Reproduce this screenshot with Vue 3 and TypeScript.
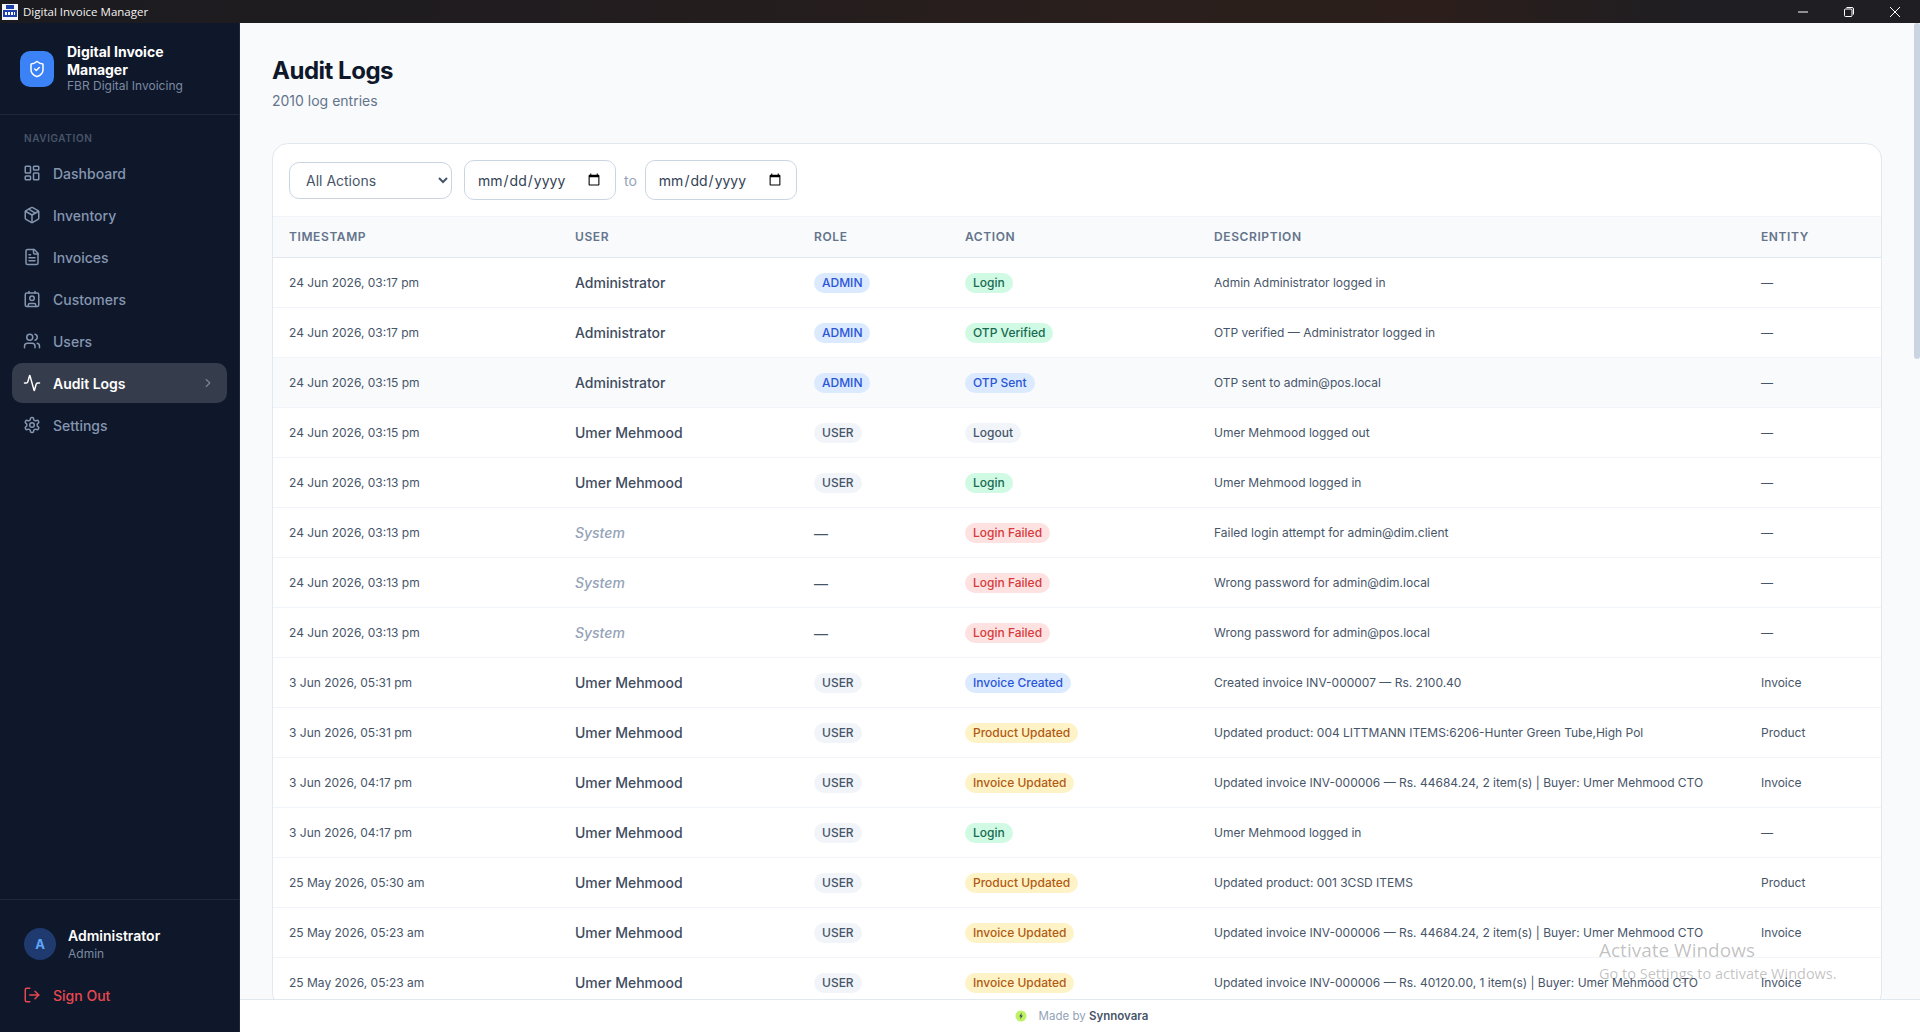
<script setup lang="ts">
type Tone = 'blue' | 'green' | 'gray' | 'amber' | 'red'

interface LogRow {
  time: string
  user: string
  role: 'ADMIN' | 'USER' | ''
  action: string
  desc: string
  entity: string
}

const tones: Record<string, Tone> = {
  Login: 'green',
  'OTP Verified': 'green',
  'OTP Sent': 'blue',
  Logout: 'gray',
  'Login Failed': 'red',
  'Invoice Created': 'blue',
  'Product Updated': 'amber',
  'Invoice Updated': 'amber',
}

const navItems = ['Dashboard', 'Inventory', 'Invoices', 'Customers', 'Users', 'Audit Logs', 'Settings']

const rows: LogRow[] = [
  { time: '24 Jun 2026, 03:17 pm', user: 'Administrator', role: 'ADMIN', action: 'Login', desc: 'Admin Administrator logged in', entity: '—' },
  { time: '24 Jun 2026, 03:17 pm', user: 'Administrator', role: 'ADMIN', action: 'OTP Verified', desc: 'OTP verified — Administrator logged in', entity: '—' },
  { time: '24 Jun 2026, 03:15 pm', user: 'Administrator', role: 'ADMIN', action: 'OTP Sent', desc: 'OTP sent to admin@pos.local', entity: '—' },
  { time: '24 Jun 2026, 03:15 pm', user: 'Umer Mehmood', role: 'USER', action: 'Logout', desc: 'Umer Mehmood logged out', entity: '—' },
  { time: '24 Jun 2026, 03:13 pm', user: 'Umer Mehmood', role: 'USER', action: 'Login', desc: 'Umer Mehmood logged in', entity: '—' },
  { time: '24 Jun 2026, 03:13 pm', user: 'System', role: '', action: 'Login Failed', desc: 'Failed login attempt for admin@dim.client', entity: '—' },
  { time: '24 Jun 2026, 03:13 pm', user: 'System', role: '', action: 'Login Failed', desc: 'Wrong password for admin@dim.local', entity: '—' },
  { time: '24 Jun 2026, 03:13 pm', user: 'System', role: '', action: 'Login Failed', desc: 'Wrong password for admin@pos.local', entity: '—' },
  { time: '3 Jun 2026, 05:31 pm', user: 'Umer Mehmood', role: 'USER', action: 'Invoice Created', desc: 'Created invoice INV-000007 — Rs. 2100.40', entity: 'Invoice' },
  { time: '3 Jun 2026, 05:31 pm', user: 'Umer Mehmood', role: 'USER', action: 'Product Updated', desc: 'Updated product: 004 LITTMANN ITEMS:6206-Hunter Green Tube,High Pol', entity: 'Product' },
  { time: '3 Jun 2026, 04:17 pm', user: 'Umer Mehmood', role: 'USER', action: 'Invoice Updated', desc: 'Updated invoice INV-000006 — Rs. 44684.24, 2 item(s) | Buyer: Umer Mehmood CTO', entity: 'Invoice' },
  { time: '3 Jun 2026, 04:17 pm', user: 'Umer Mehmood', role: 'USER', action: 'Login', desc: 'Umer Mehmood logged in', entity: '—' },
  { time: '25 May 2026, 05:30 am', user: 'Umer Mehmood', role: 'USER', action: 'Product Updated', desc: 'Updated product: 001 3CSD ITEMS', entity: 'Product' },
  { time: '25 May 2026, 05:23 am', user: 'Umer Mehmood', role: 'USER', action: 'Invoice Updated', desc: 'Updated invoice INV-000006 — Rs. 44684.24, 2 item(s) | Buyer: Umer Mehmood CTO', entity: 'Invoice' },
  { time: '25 May 2026, 05:23 am', user: 'Umer Mehmood', role: 'USER', action: 'Invoice Updated', desc: 'Updated invoice INV-000006 — Rs. 40120.00, 1 item(s) | Buyer: Umer Mehmood CTO', entity: 'Invoice' },
]
</script>

<template>
  <div class="window">
    <div class="titlebar">
      <svg class="app-icon" viewBox="0 0 16 16">
        <rect width="16" height="16" fill="#f4f6fb" />
        <rect x="4" y="1" width="8" height="4" fill="#1d3fa8" />
        <rect x="1" y="6" width="14" height="7" fill="#1d3fa8" />
        <rect x="3" y="8" width="2" height="3" fill="#fff" />
        <rect x="6" y="8" width="2" height="3" fill="#fff" />
        <rect x="9" y="8" width="2" height="3" fill="#fff" />
        <rect x="12" y="8" width="1" height="3" fill="#fff" />
      </svg>
      <span class="app-title">Digital Invoice Manager</span>
      <div class="win-controls">
        <svg viewBox="0 0 12 12"><path d="M1 6h10" /></svg>
        <svg viewBox="0 0 12 12"><rect x="1.5" y="3" width="7.5" height="7.5" rx="1" /><path d="M3.5 1.5h5.5a1.5 1.5 0 0 1 1.5 1.5v5.5" /></svg>
        <svg viewBox="0 0 12 12"><path d="M1 1l10 10M11 1L1 11" /></svg>
      </div>
    </div>

    <div class="shell">
      <aside class="sidebar">
        <div class="brand">
          <div class="logo">
            <svg class="ico" viewBox="0 0 24 24">
              <path d="M20 13c0 5-3.5 7.5-7.66 8.95a1 1 0 0 1-.67-.01C7.5 20.5 4 18 4 13V6a1 1 0 0 1 1-1c2 0 4.5-1.2 6.24-2.72a1.17 1.17 0 0 1 1.52 0C14.51 3.81 17 5 19 5a1 1 0 0 1 1 1z" />
              <path d="m9 12 2 2 4-4" />
            </svg>
          </div>
          <div class="brand-text">
            <div class="brand-name">Digital Invoice Manager</div>
            <div class="brand-sub">FBR Digital Invoicing</div>
          </div>
        </div>

        <div class="nav-label">NAVIGATION</div>
        <nav class="nav">
          <div v-for="item in navItems" :key="item" class="nav-item" :class="{ active: item === 'Audit Logs' }">
            <svg class="ico" viewBox="0 0 24 24">
              <template v-if="item === 'Dashboard'">
                <rect x="3" y="3" width="7" height="9" rx="1" />
                <rect x="14" y="3" width="7" height="5" rx="1" />
                <rect x="14" y="12" width="7" height="9" rx="1" />
                <rect x="3" y="16" width="7" height="5" rx="1" />
              </template>
              <template v-else-if="item === 'Inventory'">
                <path d="M11 21.73a2 2 0 0 0 2 0l7-4A2 2 0 0 0 21 16V8a2 2 0 0 0-1-1.73l-7-4a2 2 0 0 0-2 0l-7 4A2 2 0 0 0 3 8v8a2 2 0 0 0 1 1.73z" />
                <path d="M12 22V12" />
                <polyline points="3.29 7 12 12 20.71 7" />
                <path d="m7.5 4.27 9 5.15" />
              </template>
              <template v-else-if="item === 'Invoices'">
                <path d="M15 2H6a2 2 0 0 0-2 2v16a2 2 0 0 0 2 2h12a2 2 0 0 0 2-2V7Z" />
                <path d="M14 2v4a2 2 0 0 0 2 2h4" />
                <path d="M10 9H8" />
                <path d="M16 13H8" />
                <path d="M16 17H8" />
              </template>
              <template v-else-if="item === 'Customers'">
                <path d="M16 2v2" />
                <path d="M7 22v-2a2 2 0 0 1 2-2h6a2 2 0 0 1 2 2v2" />
                <path d="M8 2v2" />
                <circle cx="12" cy="11" r="3" />
                <rect x="3" y="4" width="18" height="18" rx="2" />
              </template>
              <template v-else-if="item === 'Users'">
                <path d="M16 21v-2a4 4 0 0 0-4-4H6a4 4 0 0 0-4 4v2" />
                <circle cx="9" cy="7" r="4" />
                <path d="M22 21v-2a4 4 0 0 0-3-3.87" />
                <path d="M16 3.13a4 4 0 0 1 0 7.75" />
              </template>
              <template v-else-if="item === 'Audit Logs'">
                <path d="M22 12h-2.48a2 2 0 0 0-1.93 1.46l-2.35 8.36a.25.25 0 0 1-.48 0L9.24 2.18a.25.25 0 0 0-.48 0l-2.35 8.36A2 2 0 0 1 4.49 12H2" />
              </template>
              <template v-else>
                <path d="M12.22 2h-.44a2 2 0 0 0-2 2v.18a2 2 0 0 1-1 1.73l-.43.25a2 2 0 0 1-2 0l-.15-.08a2 2 0 0 0-2.73.73l-.22.38a2 2 0 0 0 .73 2.73l.15.1a2 2 0 0 1 1 1.72v.51a2 2 0 0 1-1 1.74l-.15.09a2 2 0 0 0-.73 2.73l.22.38a2 2 0 0 0 2.73.73l.15-.08a2 2 0 0 1 2 0l.43.25a2 2 0 0 1 1 1.73V20a2 2 0 0 0 2 2h.44a2 2 0 0 0 2-2v-.18a2 2 0 0 1 1-1.73l.43-.25a2 2 0 0 1 2 0l.15.08a2 2 0 0 0 2.73-.73l.22-.39a2 2 0 0 0-.73-2.73l-.15-.08a2 2 0 0 1-1-1.74v-.5a2 2 0 0 1 1-1.74l.15-.09a2 2 0 0 0 .73-2.73l-.22-.38a2 2 0 0 0-2.73-.73l-.15.08a2 2 0 0 1-2 0l-.43-.25a2 2 0 0 1-1-1.73V4a2 2 0 0 0-2-2z" />
                <circle cx="12" cy="12" r="3" />
              </template>
            </svg>
            <span>{{ item }}</span>
            <svg v-if="item === 'Audit Logs'" class="chev" viewBox="0 0 24 24"><path d="m9 18 6-6-6-6" /></svg>
          </div>
        </nav>

        <div class="side-foot">
          <div class="profile">
            <div class="avatar">A</div>
            <div class="profile-text">
              <div class="profile-name">Administrator</div>
              <div class="profile-role">Admin</div>
            </div>
          </div>
          <div class="signout">
            <svg class="ico" viewBox="0 0 24 24">
              <path d="M9 21H5a2 2 0 0 1-2-2V5a2 2 0 0 1 2-2h4" />
              <polyline points="16 17 21 12 16 7" />
              <line x1="21" y1="12" x2="9" y2="12" />
            </svg>
            <span>Sign Out</span>
          </div>
        </div>
      </aside>

      <div class="right">
        <main class="main">
          <h1 class="page-title">Audit Logs</h1>
          <p class="page-sub">2010 log entries</p>

          <section class="card">
            <div class="filters">
              <select class="field select">
                <option>All Actions</option>
                <option>Login</option>
                <option>Logout</option>
              </select>
              <div class="range">
                <input class="field date" type="date" />
                <span class="to">to</span>
                <input class="field date" type="date" />
              </div>
            </div>

            <table class="log-table">
              <colgroup>
                <col class="c-time" />
                <col class="c-user" />
                <col class="c-role" />
                <col class="c-action" />
                <col class="c-desc" />
                <col class="c-entity" />
              </colgroup>
              <thead>
                <tr>
                  <th>TIMESTAMP</th>
                  <th>USER</th>
                  <th>ROLE</th>
                  <th>ACTION</th>
                  <th>DESCRIPTION</th>
                  <th>ENTITY</th>
                </tr>
              </thead>
              <tbody>
                <tr v-for="(row, i) in rows" :key="i" :class="{ hovered: i === 2 }">
                  <td class="time">{{ row.time }}</td>
                  <td class="user" :class="{ system: row.user === 'System' }">{{ row.user }}</td>
                  <td>
                    <span v-if="row.role" class="pill" :class="row.role === 'ADMIN' ? 'blue' : 'gray'">{{ row.role }}</span>
                    <span v-else class="dash">—</span>
                  </td>
                  <td><span class="pill" :class="tones[row.action]">{{ row.action }}</span></td>
                  <td class="desc">{{ row.desc }}</td>
                  <td class="desc">{{ row.entity }}</td>
                </tr>
              </tbody>
            </table>
          </section>
        </main>
        <div class="scroll-thumb"></div>

        <footer class="footer">
          <svg class="made-icon" viewBox="0 0 12 12">
            <circle cx="6" cy="6" r="5.5" fill="#bef264" />
            <path d="M6.8 2.6 4.2 6.4h1.6l-.6 3 2.6-3.8H6.2z" fill="#334155" />
          </svg>
          <span class="made">Made by <b>Synnovara</b></span>
        </footer>
      </div>
    </div>

    <div class="activate">
      <div class="activate-big">Activate Windows</div>
      <div class="activate-small">Go to Settings to activate Windows.</div>
    </div>
  </div>
</template>

<style scoped>
.window {
  height: 1032px;
  display: flex;
  flex-direction: column;
  position: relative;
  overflow: hidden;
  font-family: Inter, "Noto Sans", sans-serif;
}
.titlebar {
  height: 23px;
  flex: none;
  display: flex;
  align-items: center;
  background: linear-gradient(90deg, #1b1b1f 0%, #201c1f 25%, #2a1f1c 60%, #2b1e1b 75%, #1f1e22 88%, #1f1e22 100%);
  color: #f3f3f3;
}
.app-icon {
  width: 16px;
  height: 16px;
  margin-left: 2px;
}
.app-title {
  margin-left: 5px;
  font-family: "Open Sans", "Liberation Sans", sans-serif;
  font-size: 11.5px;
}
.win-controls {
  margin-left: auto;
  display: flex;
  gap: 34px;
  padding-right: 19px;
}
.win-controls svg {
  width: 12px;
  height: 12px;
  fill: none;
  stroke: #fff;
  stroke-width: 1;
}
.shell {
  flex: 1;
  min-height: 0;
  display: flex;
}
.ico {
  width: 18px;
  height: 18px;
  flex: none;
  fill: none;
  stroke: currentColor;
  stroke-width: 2;
  stroke-linecap: round;
  stroke-linejoin: round;
}

/* sidebar */
.sidebar {
  width: 240px;
  flex: none;
  box-sizing: border-box;
  background: #0f172a;
  border-right: 1px solid #1e293b;
  display: flex;
  flex-direction: column;
}
.brand {
  height: 92px;
  box-sizing: border-box;
  padding: 0 20px;
  display: flex;
  align-items: center;
  gap: 13px;
  border-bottom: 1px solid #1e293b;
}
.brand-text {
  margin-bottom: 2px;
}
.logo {
  width: 34px;
  height: 36px;
  flex: none;
  border-radius: 10px;
  background: #3b82f6;
  color: #fff;
  display: flex;
  align-items: center;
  justify-content: center;
}
.brand-name {
  color: #fff;
  font-size: 14px;
  font-weight: 700;
  line-height: 18px;
}
.brand-sub {
  color: #7b8ba3;
  font-size: 12px;
  line-height: 14px;
}
.nav-label {
  margin: 17px 0 9px 24px;
  color: #475569;
  font-size: 10px;
  font-weight: 600;
  line-height: 12px;
  letter-spacing: 0.06em;
}
.nav {
  padding: 0 12px;
  display: flex;
  flex-direction: column;
  gap: 2px;
}
.nav-item {
  height: 40px;
  padding: 0 12px 0 11px;
  display: flex;
  align-items: center;
  gap: 12px;
  border-radius: 10px;
  color: #8496b0;
  font-size: 14px;
  font-weight: 500;
}
.nav-item.active {
  background: rgba(255, 255, 255, 0.16);
  color: #fff;
  font-weight: 600;
}
.chev {
  width: 14px;
  height: 14px;
  margin-left: auto;
  fill: none;
  stroke: #7a8496;
  stroke-width: 2;
  stroke-linecap: round;
  stroke-linejoin: round;
}
.side-foot {
  margin-top: auto;
  border-top: 1px solid #1e293b;
  padding-top: 25px;
  height: 133px;
  box-sizing: border-box;
}
.profile {
  padding-left: 24px;
  display: flex;
  align-items: center;
  gap: 12px;
}
.avatar {
  width: 32px;
  height: 32px;
  border-radius: 50%;
  background: #1e3a6e;
  color: #60a5fa;
  font-size: 13px;
  font-weight: 700;
  display: flex;
  align-items: center;
  justify-content: center;
}
.profile-text {
  padding-top: 2px;
}
.profile-name {
  color: #fff;
  font-size: 14px;
  font-weight: 600;
  line-height: 18px;
}
.profile-role {
  color: #7b8ba3;
  font-size: 12px;
  line-height: 18px;
}
.signout {
  margin-top: 14px;
  padding-left: 23px;
  height: 36px;
  display: flex;
  align-items: center;
  gap: 12px;
  color: #e84850;
  font-size: 14px;
  font-weight: 500;
}

/* content */
.right {
  flex: 1;
  min-width: 0;
  display: flex;
  flex-direction: column;
  position: relative;
}
.main {
  flex: 1;
  min-height: 0;
  overflow: hidden;
  background: #f8fafc;
  padding: 29px 38px 0 32px;
}
.scroll-thumb {
  position: absolute;
  top: 0;
  right: 0;
  width: 6px;
  height: 336px;
  background: #cbd5e1;
  border-radius: 3px;
}
.page-title {
  margin: 0;
  color: #0f172a;
  font-size: 24px;
  font-weight: 700;
  line-height: 38px;
  letter-spacing: -0.02em;
}
.page-sub {
  margin: 1px 0 0;
  color: #64748b;
  font-size: 14px;
  line-height: 20px;
}
.card {
  margin-top: 32px;
  background: #fff;
  border: 1px solid #e2e8f0;
  border-radius: 16px;
  overflow: hidden;
}
.filters {
  height: 73px;
  box-sizing: border-box;
  padding: 0 16px;
  display: flex;
  align-items: center;
  gap: 12px;
  border-bottom: 1px solid #f1f5f9;
}
.range {
  display: flex;
  align-items: center;
  gap: 8px;
}
.field {
  box-sizing: border-box;
  border: 1px solid #cbd5e1;
  border-radius: 10px;
  background: #fff;
  font-family: inherit;
  font-size: 14px;
  outline: none;
}
.select {
  width: 163px;
  height: 37px;
  padding: 0 12px;
  color: #475569;
}
.date {
  width: 152px;
  height: 40px;
  padding: 0 12px;
  color: #334155;
}
.to {
  color: #94a3b8;
  font-size: 14px;
}
.log-table {
  width: 1608px;
  table-layout: fixed;
  border-collapse: separate;
  border-spacing: 0;
}
.c-time { width: 286px; }
.c-user { width: 239px; }
.c-role { width: 151px; }
.c-action { width: 249px; }
.c-desc { width: 547px; }
.c-entity { width: 136px; }
.log-table th {
  height: 41px;
  box-sizing: border-box;
  padding: 0 16px 2px;
  background: #f8fafc;
  border-bottom: 1px solid #e2e8f0;
  color: #64748b;
  font-size: 12px;
  font-weight: 600;
  letter-spacing: 0.05em;
  text-align: left;
}
.log-table td {
  height: 50px;
  box-sizing: border-box;
  padding: 0 16px;
  border-bottom: 1px solid #f1f5f9;
  white-space: nowrap;
}
.hovered td {
  background: #f8fafc;
}
.time,
.desc {
  color: #475569;
  font-size: 12px;
}
.user {
  color: #3f4c60;
  font-size: 14px;
  font-weight: 500;
}
.user.system {
  color: #94a3b8;
  font-style: italic;
}
.dash {
  color: #475569;
  font-size: 14px;
}
.pill {
  display: inline-block;
  height: 20px;
  padding: 0 8px;
  border-radius: 999px;
  font-size: 12px;
  font-weight: 500;
  line-height: 20px;
  vertical-align: middle;
}
.pill.blue {
  background: #dbeafe;
  color: #2a55d8;
}
.pill.green {
  background: #d1fae5;
  color: #166a50;
}
.pill.gray {
  background: #f1f5f9;
  color: #475569;
}
.pill.amber {
  background: #fef3c7;
  color: #b15a12;
}
.pill.red {
  background: #fee2e2;
  color: #d63a3a;
}
.footer {
  height: 33px;
  flex: none;
  box-sizing: border-box;
  background: #fff;
  border-top: 1px solid #e2e8f0;
  padding-left: 3px;
  display: flex;
  align-items: center;
  justify-content: center;
  gap: 12px;
}
.made-icon {
  width: 12px;
  height: 12px;
}
.made {
  color: #94a3b8;
  font-size: 11.5px;
}
.made b {
  color: #475569;
  font-weight: 600;
}

/* windows watermark sits over the table */
.activate {
  position: absolute;
  left: 1599px;
  top: 937px;
  pointer-events: none;
  font-family: "Open Sans", "Liberation Sans", sans-serif;
  color: rgba(60, 60, 60, 0.32);
}
.activate-big {
  font-size: 19px;
  line-height: 26px;
}
.activate-small {
  margin-top: 1px;
  font-size: 14.5px;
  line-height: 20px;
}
</style>

<style>
html,
body {
  margin: 0;
  height: 100%;
  overflow: hidden;
}
</style>
